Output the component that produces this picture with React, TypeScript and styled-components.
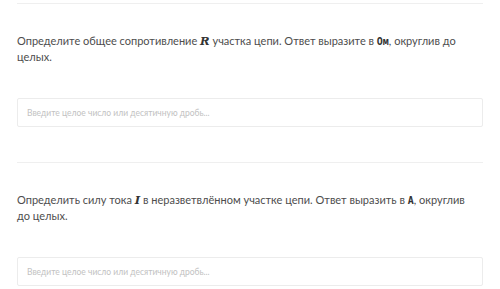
import React from "react";
import styled, { createGlobalStyle } from "styled-components";

const Global = createGlobalStyle`
  html, body { margin: 0; padding: 0; background: #ffffff; }
  body { font-family: Lato, "Open Sans", "Liberation Sans", sans-serif; }
`;

const Page = styled.div`
  display: flex;
  flex-direction: column;
  padding: 3px 17px 0 17px;
`;

const Section = styled.section`
  display: flex;
  flex-direction: column;
  border-top: 1px solid #efefef;
  padding-top: 29px;
  padding-bottom: 35px;
`;

const Question = styled.p`
  margin: 0;
  max-width: 448px;
  font-size: 11px;
  line-height: 16px;
  color: #4d4d4d;
`;

const MathVar = styled.span`
  font-family: "DejaVu Serif", "Liberation Serif", serif;
  font-style: italic;
  font-weight: bold;
  font-size: 11.5px;
  line-height: 1;
  color: #333;
`;

const Code = styled.code`
  font-family: "DejaVu Sans Mono", "Liberation Mono", monospace;
  font-weight: bold;
  font-size: 10px;
  line-height: 1;
  color: #333;
`;

const Field = styled.input`
  margin-top: 33px;
  height: 29px;
  box-sizing: border-box;
  border: 1px solid #ececec;
  border-radius: 2px;
  padding: 0 9px;
  font-family: inherit;
  font-size: 8.5px;
  color: #444;
  outline: none;
  &::placeholder { color: #c2c2c2; }
`;

const questions = [
  {
    id: 1,
    content: (
      <>
        Определите общее сопротивление <MathVar>R</MathVar> участка цепи. Ответ выразите в <Code>Ом</Code>, округлив до целых.
      </>
    ),
  },
  {
    id: 2,
    content: (
      <>
        Определить силу тока <MathVar>I</MathVar> в неразветвлённом участке цепи. Ответ выразить в <Code>A</Code>, округлив до целых.
      </>
    ),
  },
];

export default function App() {
  return (
    <>
      <Global />
      <Page>
        {questions.map((q) => (
          <Section key={q.id}>
            <Question>{q.content}</Question>
            <Field placeholder="Введите целое число или десятичную дробь..." />
          </Section>
        ))}
      </Page>
    </>
  );
}
